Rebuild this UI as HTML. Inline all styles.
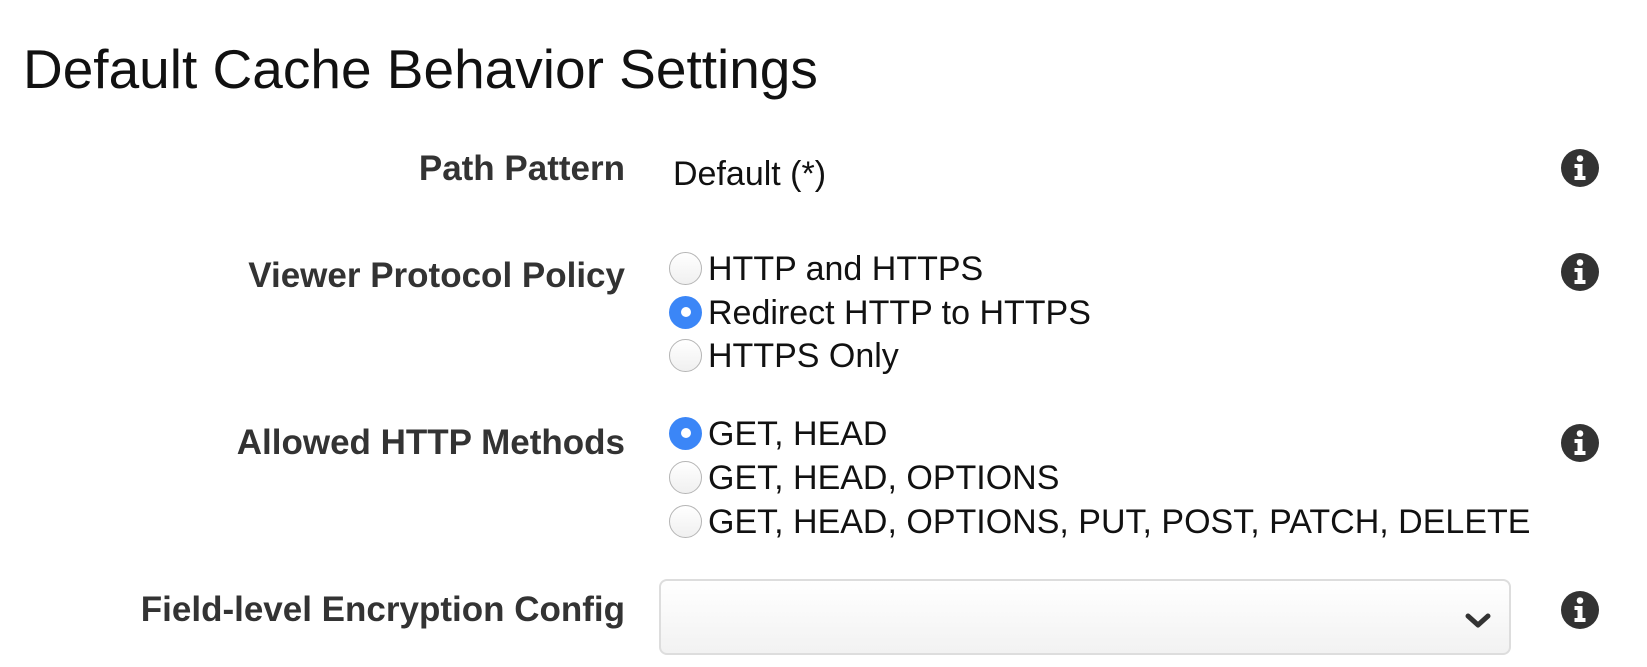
<!DOCTYPE html>
<html><head><meta charset="utf-8"><style>
body{margin:0;width:1647px;height:667px;background:#fff;position:relative;overflow:hidden;font-family:"Liberation Sans",Arial,sans-serif;}
.a{position:absolute;white-space:nowrap;}
h1{position:absolute;left:23px;top:36px;margin:0;font-weight:normal;font-size:55px;line-height:66px;color:#111;}
.lbl{position:absolute;right:1022px;font-weight:bold;font-size:35px;line-height:40px;color:#333;text-align:right;white-space:nowrap;}
.opt{position:absolute;left:669px;font-size:34px;line-height:40px;color:#111;white-space:nowrap;}
.r{display:inline-block;width:33px;height:33px;border-radius:50%;box-sizing:border-box;border:1.5px solid #b5b5b5;background:linear-gradient(#fff,#f0f0f0);vertical-align:middle;margin-right:6px;position:relative;top:-3px;}
.r.on{border:none;background:#3b86f7;}
.r.on:after{content:"";position:absolute;left:11.5px;top:11.5px;width:10px;height:10px;border-radius:50%;background:#fff;}
.info{position:absolute;left:1560px;width:40px;height:40px;}
</style></head><body>
<h1>Default Cache Behavior Settings</h1>

<div class="lbl" style="top:149px">Path Pattern</div>
<div class="opt" style="top:154px;left:673px">Default (*)</div>

<div class="lbl" style="top:256px">Viewer Protocol Policy</div>
<div class="opt" style="top:249px"><span class="r"></span>HTTP and HTTPS</div>
<div class="opt" style="top:293px"><span class="r on"></span>Redirect HTTP to HTTPS</div>
<div class="opt" style="top:336px"><span class="r"></span>HTTPS Only</div>

<div class="lbl" style="top:423px">Allowed HTTP Methods</div>
<div class="opt" style="top:414px"><span class="r on"></span>GET, HEAD</div>
<div class="opt" style="top:458px"><span class="r"></span>GET, HEAD, OPTIONS</div>
<div class="opt" style="top:502px"><span class="r"></span>GET, HEAD, OPTIONS, PUT, POST, PATCH, DELETE</div>

<div class="lbl" style="top:590px">Field-level Encryption Config</div>
<div class="a" style="left:659px;top:579px;width:852px;height:76px;box-sizing:border-box;border:2px solid #ddd;border-radius:8px;background:linear-gradient(#fff,#f2f2f2);"></div>
<svg class="a" style="left:1464px;top:612px" width="28" height="18" viewBox="0 0 28 18"><path d="M4 4 L14 13 L24 4" fill="none" stroke="#333" stroke-width="5" stroke-linecap="round" stroke-linejoin="round"/></svg>

<svg class="info" style="top:148px" viewBox="0 0 40 40"><circle cx="20" cy="20" r="19" fill="#333"/><circle cx="20" cy="10.5" r="3.3" fill="#fff"/><path d="M14.5 16h8v12h3v4h-11v-4h3v-8h-3z" fill="#fff"/></svg>
<svg class="info" style="top:252px" viewBox="0 0 40 40"><circle cx="20" cy="20" r="19" fill="#333"/><circle cx="20" cy="10.5" r="3.3" fill="#fff"/><path d="M14.5 16h8v12h3v4h-11v-4h3v-8h-3z" fill="#fff"/></svg>
<svg class="info" style="top:423px" viewBox="0 0 40 40"><circle cx="20" cy="20" r="19" fill="#333"/><circle cx="20" cy="10.5" r="3.3" fill="#fff"/><path d="M14.5 16h8v12h3v4h-11v-4h3v-8h-3z" fill="#fff"/></svg>
<svg class="info" style="top:590px" viewBox="0 0 40 40"><circle cx="20" cy="20" r="19" fill="#333"/><circle cx="20" cy="10.5" r="3.3" fill="#fff"/><path d="M14.5 16h8v12h3v4h-11v-4h3v-8h-3z" fill="#fff"/></svg>
</body></html>
